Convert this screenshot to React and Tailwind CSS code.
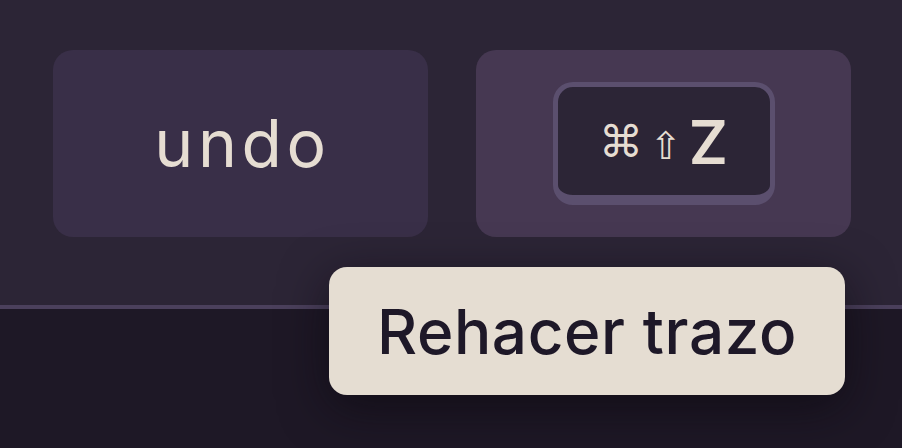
import React from 'react';

// Shortcut row: plain label on the left, the key combo chip on the right
function KeyCombo() {
  return (
    <div className="flex h-[123px] w-[222px] items-center justify-center rounded-[20px] border-[5px] border-b-[10px] border-[#5b4f6e] bg-[#2c2536] pt-[2px]">
      <div className="flex items-center gap-[7px] text-[#e6ddd2]">
        <span className="text-[44px] leading-none font-['DejaVu_Sans',sans-serif]">⌘</span>
        <span className="mt-[8px] text-[38px] leading-none font-['DejaVu_Sans',sans-serif]">⇧</span>
        <span className="text-[60px] font-semibold leading-none font-['Inter',sans-serif]">Z</span>
      </div>
    </div>
  );
}

export default function App() {
  return (
    <div className="relative h-[448px] w-[902px] overflow-hidden bg-[#1e1826] font-['Inter',sans-serif]">
      <div className="flex h-[309px] gap-[48px] border-b-[4px] border-[#4b405c] bg-[#2c2536] pl-[53px] pt-[50px]">
        <div className="flex h-[187px] w-[375px] items-center justify-center rounded-[20px] bg-[#392f48]">
          <span className="pl-[4px] text-[66px] font-normal tracking-[0.07em] text-[#e6ddd2]">undo</span>
        </div>
        <div className="flex h-[187px] w-[375px] items-center justify-center rounded-[20px] bg-[#463852]">
          <KeyCombo />
        </div>
      </div>

      {/* tooltip */}
      <div className="absolute left-[329px] top-[267px] flex h-[128px] w-[516px] items-center justify-center rounded-[18px] bg-[#e5ddd2] shadow-[0_12px_48px_rgba(10,6,14,0.6)]">
        <span className="text-[62px] font-medium tracking-[0.01em] text-[#1e1828]">Rehacer trazo</span>
      </div>
    </div>
  );
}
